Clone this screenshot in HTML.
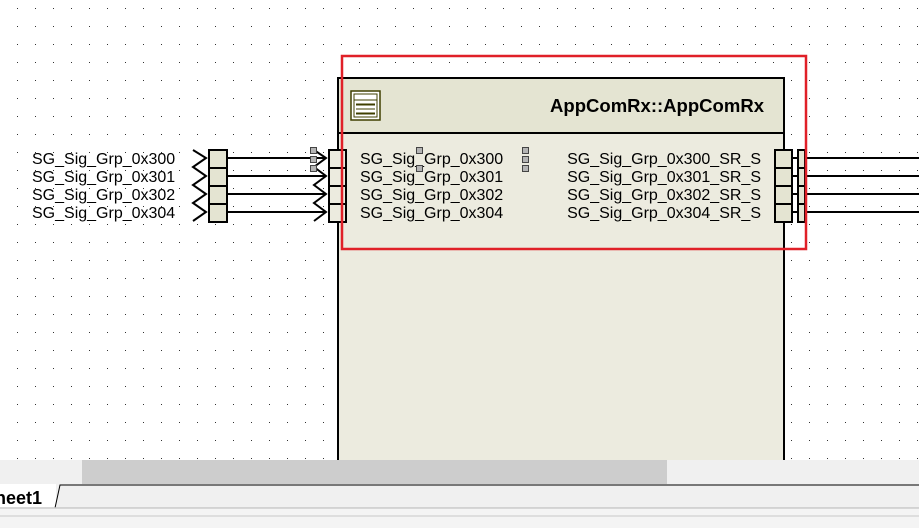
<!DOCTYPE html>
<html><head><meta charset="utf-8"><style>
html,body{margin:0;padding:0;width:919px;height:528px;overflow:hidden;background:#fff}
svg{display:block}
text{font-family:"Liberation Sans",sans-serif}
</style></head><body>
<svg width="919" height="528" viewBox="0 0 919 528" xmlns="http://www.w3.org/2000/svg">
<defs>
<pattern id="dots" x="17" y="8" width="18" height="18" patternUnits="userSpaceOnUse">
<rect x="0" y="0" width="1" height="1" fill="#333"/>
</pattern>
</defs>
<rect x="0" y="0" width="919" height="460" fill="url(#dots)"/>
<rect x="338" y="78" width="446" height="400" fill="#ecebdf" stroke="#000" stroke-width="2"/>
<rect x="339" y="79" width="444" height="54" fill="#e4e4d2"/>
<line x1="338" y1="133" x2="784" y2="133" stroke="#000" stroke-width="2"/>
<rect x="351" y="91" width="29" height="29" fill="#fff" stroke="#3f3f00" stroke-width="1.5"/>
<rect x="354" y="94" width="23" height="23" fill="none" stroke="#3f3f00" stroke-width="1"/>
<line x1="354" y1="100" x2="377" y2="100" stroke="#3f3f00"/>
<line x1="356" y1="104.5" x2="375" y2="104.5" stroke="#3f3f00" stroke-width="2"/>
<line x1="356" y1="109" x2="375" y2="109" stroke="#3f3f00" stroke-width="1"/>
<line x1="356" y1="113.5" x2="375" y2="113.5" stroke="#3f3f00" stroke-width="2"/>
<text x="764" y="112" text-anchor="end" font-size="18.5" font-weight="bold" fill="#000" textLength="214" lengthAdjust="spacingAndGlyphs">AppComRx::AppComRx</text>
<g font-size="16" fill="#000">
<text x="32" y="164">SG_Sig_Grp_0x300</text>
<text x="32" y="182">SG_Sig_Grp_0x301</text>
<text x="32" y="200">SG_Sig_Grp_0x302</text>
<text x="32" y="218">SG_Sig_Grp_0x304</text>
<text x="360" y="164">SG_Sig_Grp_0x300</text>
<text x="360" y="182">SG_Sig_Grp_0x301</text>
<text x="360" y="200">SG_Sig_Grp_0x302</text>
<text x="360" y="218">SG_Sig_Grp_0x304</text>
<text x="761" y="164" text-anchor="end">SG_Sig_Grp_0x300_SR_S</text>
<text x="761" y="182" text-anchor="end">SG_Sig_Grp_0x301_SR_S</text>
<text x="761" y="200" text-anchor="end">SG_Sig_Grp_0x302_SR_S</text>
<text x="761" y="218" text-anchor="end">SG_Sig_Grp_0x304_SR_S</text>
</g>
<g stroke="#000" stroke-width="2" fill="none">
<path d="M193 150 L206 158 L193 167 L206 176 L193 185 L206 194 L193 203 L206 212 L193 221"/>
<path d="M314 150 L326 158 L314 167 L326 176 L314 185 L326 194 L314 203 L326 212 L314 221"/>
<line x1="227" y1="158" x2="326" y2="158"/>
<line x1="227" y1="176" x2="326" y2="176"/>
<line x1="227" y1="194" x2="326" y2="194"/>
<line x1="227" y1="212" x2="326" y2="212"/>
<line x1="792" y1="158" x2="919" y2="158"/>
<line x1="792" y1="176" x2="919" y2="176"/>
<line x1="792" y1="194" x2="919" y2="194"/>
<line x1="792" y1="212" x2="919" y2="212"/>
</g>
<g stroke="#000" stroke-width="2">
<rect x="209" y="150" width="18" height="72" fill="#e4e4d2"/>
<line x1="209" y1="168" x2="227" y2="168"/><line x1="209" y1="186" x2="227" y2="186"/><line x1="209" y1="204" x2="227" y2="204"/>
<rect x="329" y="150" width="17" height="72" fill="#ecebdf"/>
<line x1="329" y1="168" x2="346" y2="168"/><line x1="329" y1="186" x2="346" y2="186"/><line x1="329" y1="204" x2="346" y2="204"/>
<rect x="775" y="150" width="17" height="72" fill="#e4e4d2"/>
<line x1="775" y1="168" x2="792" y2="168"/><line x1="775" y1="186" x2="792" y2="186"/><line x1="775" y1="204" x2="792" y2="204"/>
<rect x="798" y="150" width="7" height="72" fill="#e4e4d2"/>
<line x1="798" y1="168" x2="805" y2="168"/><line x1="798" y1="186" x2="805" y2="186"/><line x1="798" y1="204" x2="805" y2="204"/>
</g>
<g fill="#b4b4b4" stroke="#444" stroke-width="1">
<rect x="310.5" y="147.5" width="6" height="6"/><rect x="310.5" y="156.5" width="6" height="6"/><rect x="310.5" y="165.5" width="6" height="6"/>
<rect x="416.5" y="147.5" width="6" height="6"/><rect x="416.5" y="165.5" width="6" height="6"/>
<rect x="522.5" y="147.5" width="6" height="6"/><rect x="522.5" y="156.5" width="6" height="6"/><rect x="522.5" y="165.5" width="6" height="6"/>
</g>
<rect x="342" y="56" width="464" height="193" fill="none" stroke="#e02028" stroke-width="2.5"/>
<rect x="0" y="460" width="919" height="24" fill="#f0f0f0"/>
<rect x="82" y="460" width="585" height="24" fill="#cdcdcd"/>
<rect x="0" y="484" width="919" height="24" fill="#f0f0f0"/>
<rect x="0" y="484" width="56" height="24" fill="#fff"/>
<path d="M55 508 L60 485 L919 485" stroke="#000" stroke-width="1" fill="none"/>
<line x1="0" y1="508" x2="919" y2="508" stroke="#c8c8c8" stroke-width="1.5"/>
<rect x="0" y="509" width="919" height="19" fill="#f4f4f4"/>
<line x1="0" y1="516" x2="919" y2="516" stroke="#c8c8c8" stroke-width="1"/>
<text x="-5" y="504" font-size="18" font-weight="bold" fill="#000">heet1</text>
</svg>
</body></html>
